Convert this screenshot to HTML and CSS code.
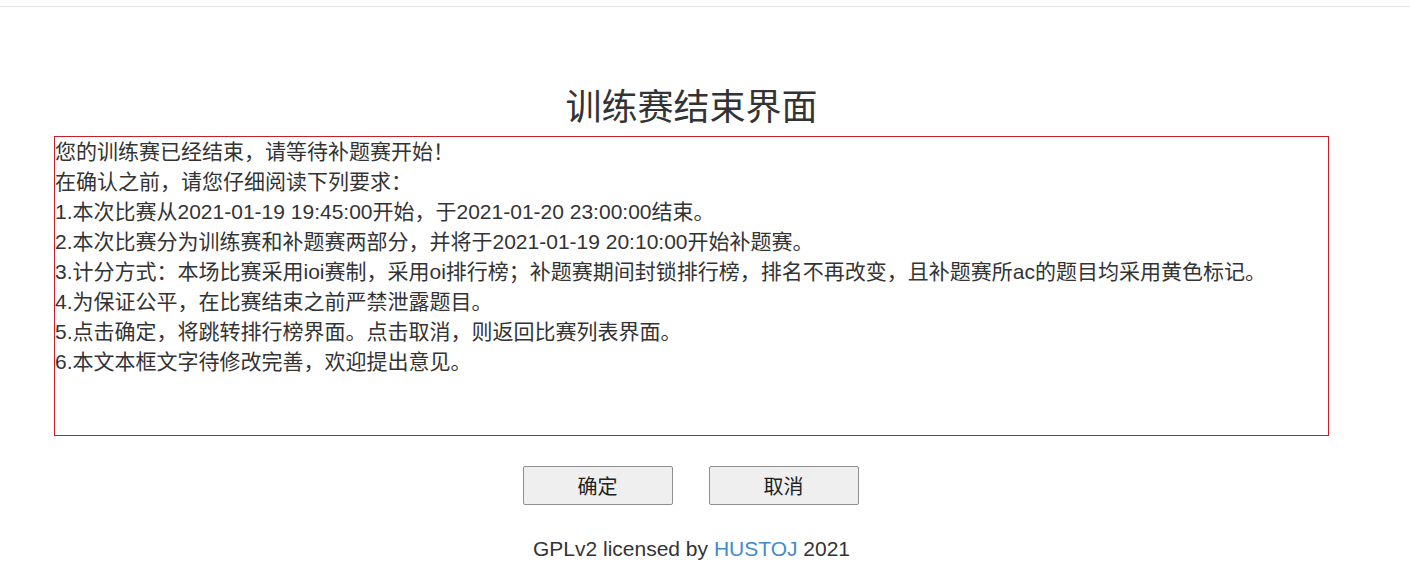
FILE: index.html
```html
<!DOCTYPE html>
<html>
<head>
<meta charset="utf-8">
<link rel="stylesheet" href="styles.css">
</head>
<body>
<div class="topbar"></div>
<main class="page">
  <h1 class="title">训练赛结束界面</h1>
  <div class="notice">
    <p>您的训练赛已经结束，请等待补题赛开始！</p>
    <p>在确认之前，请您仔细阅读下列要求：</p>
    <p>1.本次比赛从2021-01-19 19:45:00开始，于2021-01-20 23:00:00结束。</p>
    <p>2.本次比赛分为训练赛和补题赛两部分，并将于2021-01-19 20:10:00开始补题赛。</p>
    <p>3.计分方式：本场比赛采用ioi赛制，采用oi排行榜；补题赛期间封锁排行榜，排名不再改变，且补题赛所ac的题目均采用黄色标记。</p>
    <p>4.为保证公平，在比赛结束之前严禁泄露题目。</p>
    <p>5.点击确定，将跳转排行榜界面。点击取消，则返回比赛列表界面。</p>
    <p>6.本文本框文字待修改完善，欢迎提出意见。</p>
  </div>
  <div class="actions">
    <button class="btn">确定</button>
    <button class="btn">取消</button>
  </div>
  <footer class="footer">GPLv2 licensed by <a class="link">HUSTOJ</a> 2021</footer>
</main>
</body>
</html>
```
FILE: styles.css
```css
html, body {
  margin: 0;
  padding: 0;
  background: #fff;
}
body {
  font-family: "Liberation Sans", "Noto Sans CJK SC", sans-serif;
  color: #333;
}
.topbar {
  height: 6px;
  border-bottom: 1px solid #e5e5e5;
  background: #fff;
}
.page {
  width: 1275px;
  margin-left: 54px;
  display: flex;
  flex-direction: column;
  align-items: center;
}
.title {
  margin: 73px 0 0;
  height: 56px;
  font-size: 36px;
  font-weight: normal;
  line-height: 56px;
  color: #333;
}
.notice {
  align-self: stretch;
  box-sizing: border-box;
  height: 300px;
  border: 1px solid #c81e28;
  padding: 0;
  font-size: 21px;
  line-height: 30px;
  color: #333;
}
.notice p {
  margin: 0;
}
.actions {
  display: flex;
  gap: 36px;
  margin-top: 30px;
  margin-right: 2px;
}
.btn {
  width: 150px;
  height: 39px;
  box-sizing: border-box;
  background: #efefef;
  border: 1px solid #8f8f8f;
  border-radius: 2px;
  font-family: "Liberation Sans", "Noto Sans CJK SC", sans-serif;
  font-size: 20px;
  color: #222;
  padding: 0;
}
.footer {
  margin-top: 32px;
  font-size: 21px;
  line-height: 24px;
  color: #333;
}
.link {
  color: #428bca;
  text-decoration: none;
}
```
